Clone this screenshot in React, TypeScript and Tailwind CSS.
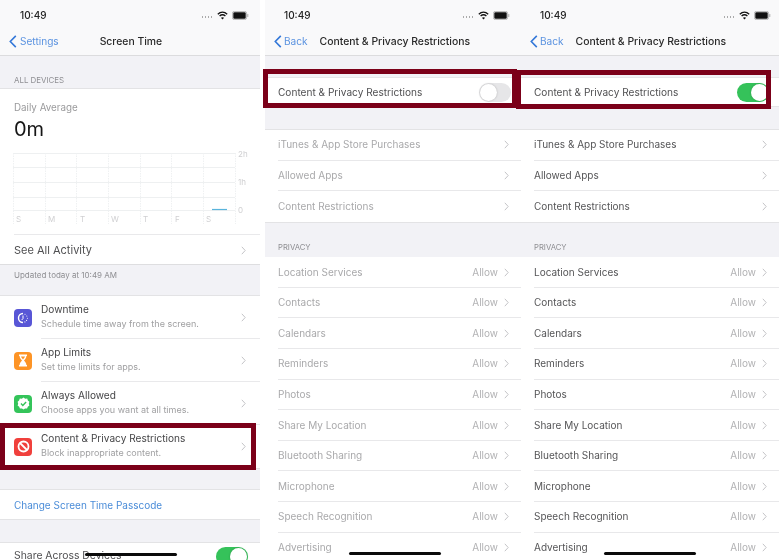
const font = "font-['Inter',sans-serif]";

function Chevron({ className = "" }: { className?: string }) {
  return (
    <svg width="5" height="9" viewBox="0 0 5 9" fill="none" className={className}>
      <path d="M0.8 0.8L4.2 4.5L0.8 8.2" stroke="#c4c4c7" strokeWidth="1" />
    </svg>
  );
}

function StatusBar({ pad }: { pad: string }) {
  return (
    <div className={`h-[29px] pt-[2px] flex items-center ${pad}`}>
      <span className="text-[10px] font-medium text-[#222] w-[26px]">10:49</span>
      <div className="ml-auto flex items-center">
        <div className="flex gap-[1.5px] mr-[3px] mt-[3px]">
          <i className="w-[1.5px] h-[1.5px] bg-[#aaa]" />
          <i className="w-[1.5px] h-[1.5px] bg-[#aaa]" />
          <i className="w-[1.5px] h-[1.5px] bg-[#aaa]" />
          <i className="w-[1.5px] h-[1.5px] bg-[#aaa]" />
        </div>
        <svg width="11" height="9" viewBox="0 0 11 9" fill="none" className="mx-[2px]">
          <path d="M0.8 3.2C3.6 0.6 7.4 0.6 10.2 3.2" stroke="#111" strokeWidth="1.3" />
          <path d="M2.6 5C4.4 3.4 6.6 3.4 8.4 5" stroke="#111" strokeWidth="1.3" />
          <path d="M5.5 8.6L3.9 6.8C4.9 6 6.1 6 7.1 6.8Z" fill="#111" />
        </svg>
        <svg width="17" height="9" viewBox="0 0 17 9" className="ml-[2px]">
          <rect x="0.4" y="0.4" width="14.2" height="8.2" rx="2" fill="none" stroke="#999" strokeWidth="0.7" />
          <rect x="1.3" y="1.3" width="12.4" height="6.4" rx="1.2" fill="#111" />
          <rect x="15.3" y="3" width="1" height="3" rx="0.5" fill="#aaa" />
        </svg>
      </div>
    </div>
  );
}

function NavBar({ back, title, center }: { back: string; title: string; center: boolean }) {
  return (
    <div className="bg-[#f9f9fa] border-b border-[#dcdcde]">
      <div className="h-[26px] pb-[1px] flex items-center">
        <svg width="8" height="13" viewBox="0 0 8 13" fill="none" className="ml-[9px]">
          <path d="M6.8 0.9L1.3 6.5L6.8 12.1" stroke="#3478d8" strokeWidth="1.6" />
        </svg>
        <span className={`text-[10.1px] text-[#5b93e0] ${center ? "ml-[3px]" : "ml-[2px]"}`}>{back}</span>
        <span className={`text-[10.4px] font-medium text-[#2a2a2a] ${center ? "ml-[41px]" : "ml-[12px]"}`}>{title}</span>
      </div>
    </div>
  );
}

function Toggle({ on }: { on: boolean }) {
  return (
    <div className={`w-[32px] h-[19px] rounded-full p-[1px] flex ${on ? "bg-[#35c25a] justify-end" : "bg-[#e6e6e8] justify-start"}`}>
      <div className="w-[17px] h-[17px] rounded-full bg-white shadow-[0_0_2px_rgba(0,0,0,0.25)]" />
    </div>
  );
}

function PlainRow({ label, value, dim, last }: { label: string; value?: string; dim: boolean; last?: boolean }) {
  return (
    <div className="pl-[13px]">
      <div className={`h-[30.6px] flex items-center pr-[12px] ${last ? "" : "border-b border-[#e8e8ea]"}`}>
        <span className={`text-[10px] ${dim ? "text-[#a9a9ab]" : "text-[#555557]"}`}>{label}</span>
        {value && <span className="ml-auto text-[10px] text-[#b2b2b4]">{value}</span>}
        <Chevron className={value ? "ml-[6px]" : "ml-auto"} />
      </div>
    </div>
  );
}

const purchaseRows = ["iTunes & App Store Purchases", "Allowed Apps", "Content Restrictions"];
const privacyRows = [
  "Location Services",
  "Contacts",
  "Calendars",
  "Reminders",
  "Photos",
  "Share My Location",
  "Bluetooth Sharing",
  "Microphone",
  "Speech Recognition",
  "Advertising",
];

function RestrictionsPane({ on, width, pad }: { on: boolean; width: string; pad: string }) {
  return (
    <div className={`${width} shrink-0 bg-[#f2f2f6] h-[560px] overflow-hidden`}>
      <div className="bg-[#f9f9fa]">
        <StatusBar pad={pad} />
      </div>
      <NavBar back="Back" title="Content & Privacy Restrictions" center={false} />
      <div className="h-[21px]" />
      {/* TOGGLE */}
      <div className="bg-white h-[30px] pl-[13px] pr-[10px] flex items-center border-y border-[#e6e6e8]">
        <span className="text-[10.1px] text-[#505052] mt-px">Content &amp; Privacy Restrictions</span>
        <div className="ml-auto">
          <Toggle on={on} />
        </div>
      </div>
      <div className="h-[22px]" />
      {/* PURCHASES */}
      <div className="bg-white border-y border-[#e3e3e5]">
        {purchaseRows.map((label, i) => (
          <PlainRow key={label} label={label} dim={!on} last={i === 2} />
        ))}
      </div>
      {/* PRIVACY */}
      <div className="h-[34.5px] pl-[13px] flex items-end pb-[4px] text-[7.7px] text-[#8e8e92]">PRIVACY</div>
      <div className="bg-white">
        {privacyRows.map((label) => (
          <PlainRow key={label} label={label} value="Allow" dim={!on} />
        ))}
      </div>
    </div>
  );
}

function IconTile({ color, children }: { color: string; children: React.ReactNode }) {
  return (
    <div className={`w-[18px] h-[18px] rounded-[4px] shrink-0 flex items-center justify-center ${color}`}>
      {children}
    </div>
  );
}

const featureRows = [
  {
    title: "Downtime",
    sub: "Schedule time away from the screen.",
    color: "bg-[#5856d6]",
    icon: (
      <svg width="12" height="12" viewBox="0 0 12 12" fill="none">
        <path d="M6 1.5A4.5 4.5 0 0 0 6 10.5" stroke="#fff" strokeWidth="1.4" />
        <path d="M6 3.5V6.5L4.7 8" stroke="#fff" strokeWidth="1" />
        <circle cx="8" cy="2.3" r="0.55" fill="#fff" />
        <circle cx="9.8" cy="4" r="0.55" fill="#fff" />
        <circle cx="10.4" cy="6.2" r="0.55" fill="#fff" />
        <circle cx="9.6" cy="8.4" r="0.55" fill="#fff" />
        <circle cx="7.9" cy="9.9" r="0.55" fill="#fff" />
      </svg>
    ),
  },
  {
    title: "App Limits",
    sub: "Set time limits for apps.",
    color: "bg-[#fd9426]",
    icon: (
      <svg width="10" height="13" viewBox="0 0 10 13">
        <path d="M1 0.5H9V2H8.4C8.4 4.5 6.6 5.4 6 6.5C6.6 7.6 8.4 8.5 8.4 11H9V12.5H1V11H1.6C1.6 8.5 3.4 7.6 4 6.5C3.4 5.4 1.6 4.5 1.6 2H1Z" fill="#fff" />
        <path d="M3 2.4H7C6.8 3.6 5.6 4.4 5 5.4C4.4 4.4 3.2 3.6 3 2.4Z" fill="#fd9426" />
      </svg>
    ),
  },
  {
    title: "Always Allowed",
    sub: "Choose apps you want at all times.",
    color: "bg-[#34c45a]",
    icon: (
      <svg width="13" height="13" viewBox="0 0 13 13">
        <path d="M6.5 0.6L8.2 1.7L10.2 1.6L10.9 3.5L12.4 4.8L11.8 6.7L12.4 8.6L10.8 9.8L10.1 11.6L8.1 11.5L6.5 12.6L4.9 11.5L2.9 11.6L2.2 9.8L0.6 8.6L1.2 6.7L0.6 4.8L2.1 3.5L2.8 1.6L4.8 1.7Z" fill="#fff" />
        <path d="M4 6.6L5.8 8.4L9.1 4.9" fill="none" stroke="#34c45a" strokeWidth="1.4" />
      </svg>
    ),
  },
  {
    title: "Content & Privacy Restrictions",
    sub: "Block inappropriate content.",
    color: "bg-[#f0403c]",
    icon: (
      <svg width="13" height="13" viewBox="0 0 13 13" fill="none">
        <circle cx="6.5" cy="6.5" r="5" stroke="#fff" strokeWidth="1.8" />
        <path d="M3 3L10 10" stroke="#fff" strokeWidth="1.8" />
      </svg>
    ),
  },
];

const dayLabels = [
  { x: 16, t: "S" },
  { x: 48, t: "M" },
  { x: 80, t: "T" },
  { x: 111, t: "W" },
  { x: 143, t: "T" },
  { x: 175, t: "F" },
  { x: 206, t: "S" },
];

function UsageChart() {
  const columns = [13, 45, 76, 108, 140, 171, 203, 235];
  const lines = [153, 167, 182, 197, 210];
  return (
    <svg width="260" height="80" viewBox="0 145 260 80" className="block">
      {lines.map((y) => (
        <line key={y} x1="13" x2="235" y1={y + 0.5} y2={y + 0.5} stroke="#eef0f1" />
      ))}
      {columns.map((x) => (
        <line key={x} x1={x + 0.5} x2={x + 0.5} y1="153" y2="224" stroke="#eff1f2" strokeDasharray="1.5 1" />
      ))}
      <line x1="212" x2="227" y1="209.5" y2="209.5" stroke="#5ab4dc" strokeWidth="1.2" />
      {dayLabels.map((d, i) => (
        <text key={i} x={d.x} y="222" fontSize="8" fill="#d0d0d2">{d.t}</text>
      ))}
      <text x="238" y="157" fontSize="8" fill="#cfcfd1">2h</text>
      <text x="238" y="185" fontSize="8" fill="#cfcfd1">1h</text>
      <text x="238" y="213" fontSize="8" fill="#cfcfd1">0</text>
    </svg>
  );
}

function ScreenTimePane() {
  return (
    <div className="w-[260px] shrink-0 bg-[#f2f2f6] h-[560px] overflow-hidden">
      <div className="bg-[#f9f9fa]">
        <StatusBar pad="pl-[20px] pr-[11px]" />
      </div>
      <NavBar back="Settings" title="Screen Time" center={true} />
      <div className="h-[33px] pl-[14px] flex items-end pb-[1px] text-[7.9px] text-[#909094] border-b border-[#e3e3e5]">ALL DEVICES</div>

      {/* DAILY AVERAGE */}
      <div className="bg-white h-[176px] border-b border-[#dedee0]">
        <div className="pt-[12px] pl-[14px] text-[9.8px] leading-[14px] text-[#9a9a9c]">Daily Average</div>
        <div className="pl-[14px] mt-[1px] text-[20px] leading-[26px] text-[#161616]">0m</div>
        <div className="mt-[3px]">
          <UsageChart />
        </div>
        <div className="ml-[14px] mt-[9px] border-t border-[#e9e9eb] h-[31px] pr-[14px] flex items-center">
          <span className="text-[11px] text-[#505052]">See All Activity</span>
          <Chevron className="ml-auto" />
        </div>
      </div>
      <div className="h-[30px] pl-[14px] text-[8px] text-[#8e8e92] pt-[4px] leading-[12px]">Updated today at 10:49 AM</div>

      {/* FEATURES */}
      <div className="bg-white border-y border-[#e3e3e5]">
        {featureRows.map((row, i) => (
          <div key={row.title} className="pl-[14px] flex items-center">
            <IconTile color={row.color}>{row.icon}</IconTile>
            <div className={`ml-[9px] flex-1 h-[43px] pr-[14px] flex items-center ${i < 3 ? "border-b border-[#e9e9eb]" : ""}`}>
              <div className="mb-[3px]">
                <div className="text-[10.1px] leading-[14px] text-[#454547]">{row.title}</div>
                <div className="text-[9px] leading-[12px] mt-[2px] text-[#a0a0a2]">{row.sub}</div>
              </div>
              <Chevron className="ml-auto" />
            </div>
          </div>
        ))}
      </div>
      <div className="h-[20px]" />

      <div className="bg-white border-y border-[#e3e3e5] h-[31px] pl-[14px] flex items-center">
        <span className="text-[10px] text-[#4a8cd8] mt-px">Change Screen Time Passcode</span>
      </div>
      <div className="h-[22px]" />

      <div className="bg-white border-t border-[#e3e3e5] h-[40px] pl-[14px] pr-[12px] pt-[4px] flex items-start">
        <span className="text-[10.4px] leading-[14px] text-[#505052] mt-[2px]">Share Across Devices</span>
        <div className="ml-auto">
          <Toggle on={true} />
        </div>
      </div>
    </div>
  );
}

export default function App() {
  return (
    <div className={`relative w-[779px] h-[560px] overflow-hidden bg-white flex blur-[0.3px] ${font}`}>
      <ScreenTimePane />
      <div className="w-[5px] shrink-0" />
      <RestrictionsPane on={false} width="w-[256px]" pad="pl-[19px] pr-[11px]" />
      <RestrictionsPane on={true} width="w-[258px]" pad="pl-[19px] pr-[8px]" />

      {/* HIGHLIGHT BOXES */}
      <div className="absolute left-0 top-[423px] w-[256px] h-[47px] border-[5px] border-[#7b0019]" />
      <div className="absolute left-[263px] top-[69px] w-[254px] h-[39px] border-[5px] border-[#7b0019]" />
      <div className="absolute left-[516px] top-[70px] w-[255px] h-[39px] border-[5px] border-[#7b0019]" />

      {/* HOME INDICATORS */}
      <div className="absolute left-[85px] top-[553px] w-[92px] h-[3px] rounded-full bg-[#0a0a0a]" />
      <div className="absolute left-[349px] top-[552px] w-[92px] h-[3px] rounded-full bg-[#0a0a0a]" />
      <div className="absolute left-[604px] top-[552px] w-[92px] h-[3px] rounded-full bg-[#0a0a0a]" />
    </div>
  );
}
